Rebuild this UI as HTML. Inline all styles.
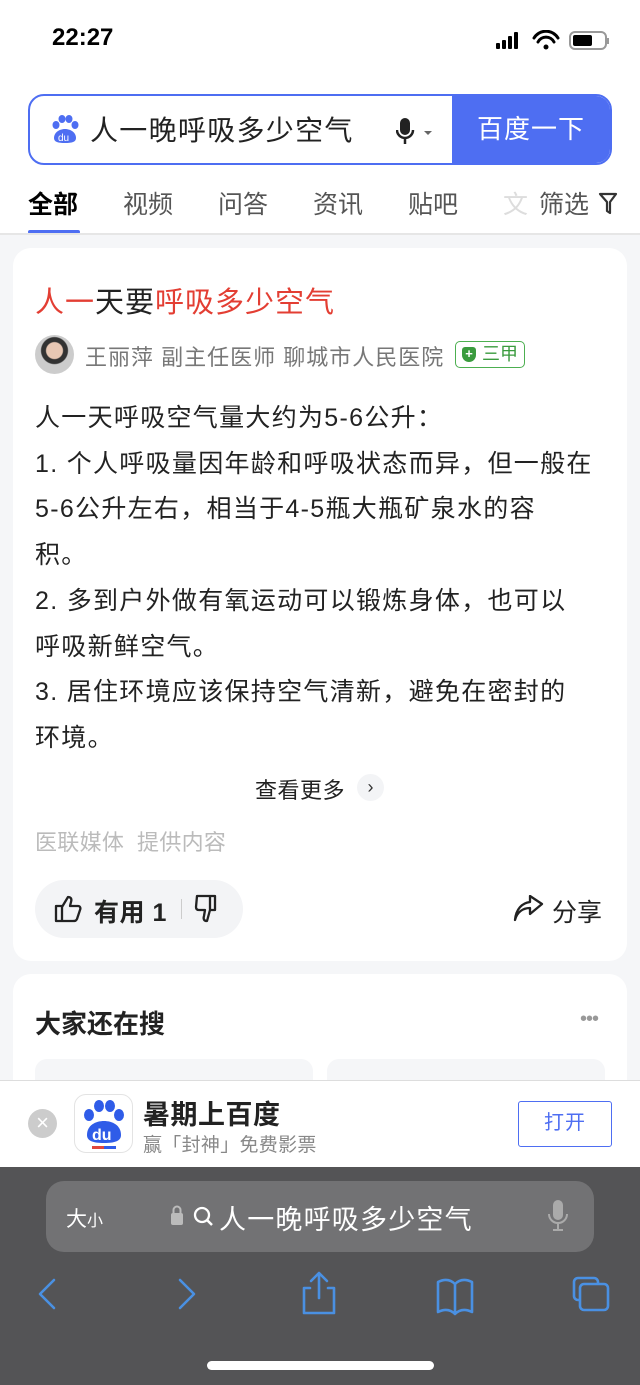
<!DOCTYPE html>
<html><head><meta charset="utf-8"><style>
*{margin:0;padding:0;box-sizing:border-box}
body{width:640px;height:1385px;overflow:hidden;background:#f5f6f8;font-family:"Liberation Sans","Noto Sans CJK SC",sans-serif;position:relative}
.abs{position:absolute;white-space:nowrap}
</style></head><body>
<div class="abs" style="left:0;top:0;width:640px;height:234px;background:#fff"></div>
<div class="abs" style="left:52px;top:24px;font-size:24px;font-weight:bold;color:#000">22:27</div>
<svg class="abs" style="left:494px;top:30px" width="120" height="22">
<rect x="2" y="13" width="4" height="6" rx="1" fill="#000"/><rect x="8" y="10" width="4" height="9" rx="1" fill="#000"/><rect x="14" y="6" width="4" height="13" rx="1" fill="#000"/><rect x="20" y="2" width="4" height="17" rx="1" fill="#000"/>
<path d="M40 8a14 14 0 0 1 24 0M44 12a9 9 0 0 1 16 0" stroke="#000" stroke-width="3" fill="none" stroke-linecap="round"/><circle cx="52" cy="17" r="2.5" fill="#000"/>
<rect x="76" y="2" width="36" height="17" rx="5" stroke="#999" stroke-width="2" fill="none"/><rect x="79" y="5" width="19" height="11" rx="2" fill="#000"/><rect x="113" y="8" width="2" height="6" fill="#999"/>
</svg>
<div class="abs" style="left:28px;top:94px;width:584px;height:71px;border:2px solid #4e6ef2;border-radius:16px;overflow:hidden;background:#fff">
<div class="abs" style="right:0;top:0;width:158px;height:71px;background:#4e6ef2;color:#fff;font-size:26px;letter-spacing:1px;line-height:67px;text-align:center">百度一下</div>
<svg class="abs" style="left:20px;top:18px" width="30" height="32"><g fill="#4e6ef2"><ellipse cx="6" cy="11" rx="3.5" ry="4"/><ellipse cx="12" cy="5" rx="3.5" ry="4"/><ellipse cx="19" cy="5" rx="3.5" ry="4"/><ellipse cx="25" cy="11" rx="3.5" ry="4"/><path d="M4 24c0-6 6-9 11-9s11 3 11 9c0 4-4 5-11 5s-11-1-11-5z"/></g><text x="8" y="27" font-size="10" fill="#fff" font-family="Liberation Sans">du</text></svg>
<div class="abs" style="left:60px;top:13px;font-size:28px;letter-spacing:1.3px;color:#222">人一晚呼吸多少空气</div>
<svg class="abs" style="left:366px;top:20px" width="44" height="32"><rect x="4" y="2" width="10" height="17" rx="5" fill="#222"/><path d="M1 14a8 8 0 0 0 16 0M9 22v6" stroke="#222" stroke-width="2.5" fill="none"/><path d="M28 15l4 4 4-4z" fill="#666"/></svg>
</div>
<div class="abs" style="top:185px;left:28px;font-size:25px;color:#000;font-weight:bold">全部</div>
<div class="abs" style="top:230px;left:28px;width:52px;height:4px;background:#4e6ef2;border-radius:2px"></div>
<div class="abs" style="top:185px;left:123px;font-size:25px;color:#555">视频</div>
<div class="abs" style="top:185px;left:218px;font-size:25px;color:#555">问答</div>
<div class="abs" style="top:185px;left:313px;font-size:25px;color:#555">资讯</div>
<div class="abs" style="top:185px;left:408px;font-size:25px;color:#555">贴吧</div>
<div class="abs" style="top:185px;left:503px;font-size:25px;color:#ddd">文</div>
<div class="abs" style="top:185px;left:530px;width:110px;height:40px;background:#fff"></div>
<div class="abs" style="top:185px;left:539px;font-size:25px;color:#555">筛选</div>
<svg class="abs" style="left:597px;top:191px" width="24" height="26"><path d="M3 3h16l-6 8v11l-3-2v-9z" stroke="#333" stroke-width="2.2" fill="none" stroke-linejoin="round"/></svg>
<div class="abs" style="top:233px;left:0;width:640px;height:2px;background:#e6e6e6"></div>

<div class="abs" style="left:13px;top:248px;width:614px;height:713px;background:#fff;border-radius:18px"></div>
<div class="abs" style="left:35px;top:279px;font-size:29px;letter-spacing:1px;color:#e33e33">人一<span style="color:#222">天要</span>呼吸多少空气</div>
<div class="abs" style="left:35px;top:335px;width:39px;height:39px;border-radius:50%;background:radial-gradient(circle at 50% 40%,#e8c8b4 0 8px,#333 9px 13px,#ccc 14px)"></div>
<div class="abs" style="left:85px;top:340px;font-size:22px;letter-spacing:1px;color:#777">王丽萍 副主任医师 聊城市人民医院</div>
<div class="abs" style="left:455px;top:341px;width:70px;height:27px;border:1.5px solid #4caf50;border-radius:5px;color:#3a9b3e;font-size:18px;line-height:24px;padding-left:26px">三甲</div>
<div class="abs" style="left:462px;top:347px;width:14px;height:15px;background:#3a9b3e;border-radius:3px 3px 7px 7px;color:#fff;font-size:13px;line-height:14px;text-align:center;font-weight:bold">+</div>
<div class="abs" style="left:35px;top:396px;font-size:25px;letter-spacing:1.3px;line-height:45.7px;color:#222">人一天呼吸空气量大约为5-6公升：<br>1. 个人呼吸量因年龄和呼吸状态而异，但一般在<br>5-6公升左右，相当于4-5瓶大瓶矿泉水的容<br>积。<br>2. 多到户外做有氧运动可以锻炼身体，也可以<br>呼吸新鲜空气。<br>3. 居住环境应该保持空气清新，避免在密封的<br>环境。</div>
<div class="abs" style="left:255px;top:773px;font-size:22px;letter-spacing:0.5px;color:#222">查看更多</div>
<div class="abs" style="left:357px;top:774px;width:27px;height:27px;border-radius:50%;background:#f3f4f6;color:#333;font-size:18px;line-height:26px;text-align:center">›</div>
<div class="abs" style="left:35px;top:825px;font-size:22px;letter-spacing:0.3px;color:#bbb">医联媒体 &nbsp;提供内容</div>
<div class="abs" style="left:35px;top:880px;width:208px;height:58px;border-radius:29px;background:#f3f4f6"></div>
<svg class="abs" style="left:54px;top:894px" width="30" height="30"><path d="M2 12h6v15H2zM8 13l6-10c3 0 4 2 3 5l-1 4h8c2 0 3 2 2 4l-3 9c-1 2-2 2-4 2H8" stroke="#222" stroke-width="2.3" fill="none" stroke-linejoin="round"/></svg>
<div class="abs" style="left:94px;top:893px;font-size:25px;letter-spacing:0.5px;color:#222;font-weight:bold">有用 1</div>
<div class="abs" style="left:181px;top:899px;width:1px;height:20px;background:#ccc"></div>
<svg class="abs" style="left:193px;top:894px" width="30" height="30"><path d="M4 2h18v14h-5l-3 11c-3 0-4-2-3-5l1-6H6c-2 0-3-1-3-3zM17 2v14" stroke="#222" stroke-width="2.3" fill="none" stroke-linejoin="round"/></svg>
<svg class="abs" style="left:513px;top:895px" width="32" height="28"><path d="M2 25c2-8 8-12 15-12v6l12-10-12-8v6C9 8 3 14 2 25z" stroke="#222" stroke-width="2.3" fill="none" stroke-linejoin="round"/></svg>
<div class="abs" style="left:552px;top:893px;font-size:25px;color:#222">分享</div>

<div class="abs" style="left:13px;top:974px;width:614px;height:200px;background:#fff;border-radius:18px"></div>
<div class="abs" style="left:35px;top:1004px;font-size:26px;color:#222;font-weight:bold">大家还在搜</div>
<div class="abs" style="left:580px;top:1008px;font-size:20px;color:#999;letter-spacing:-1px">•••</div>
<div class="abs" style="left:35px;top:1059px;width:278px;height:40px;background:#f5f6f8;border-radius:12px"></div>
<div class="abs" style="left:327px;top:1059px;width:278px;height:40px;background:#f5f6f8;border-radius:12px"></div>

<div class="abs" style="left:0;top:1080px;width:640px;height:88px;background:#fff;border-top:1px solid #ddd"></div>
<div class="abs" style="left:28px;top:1109px;width:29px;height:29px;border-radius:50%;background:#ccc;color:#fff;font-size:22px;line-height:28px;text-align:center">×</div>
<div class="abs" style="left:74px;top:1094px;width:59px;height:59px;border-radius:12px;border:1px solid #e3e3e3;background:#fff"></div>
<svg class="abs" style="left:79px;top:1097px" width="50" height="54"><g fill="#2f5ce8"><ellipse cx="10" cy="18" rx="5" ry="6"/><ellipse cx="20" cy="9" rx="5" ry="6"/><ellipse cx="31" cy="9" rx="5" ry="6"/><ellipse cx="40" cy="18" rx="5" ry="6"/><path d="M8 38c0-10 9-14 17-14s17 4 17 14c0 6-6 8-17 8S8 44 8 38z"/></g><text x="13" y="43" font-size="16" fill="#fff" font-weight="bold" font-family="Liberation Sans">du</text><rect x="13" y="49" width="12" height="3" fill="#e0463c"/><rect x="25" y="49" width="12" height="3" fill="#2f5ce8"/></svg>
<div class="abs" style="left:143px;top:1093px;font-size:27px;letter-spacing:0.5px;color:#222;font-weight:bold">暑期上百度</div>
<div class="abs" style="left:143px;top:1130px;font-size:19px;letter-spacing:0.3px;color:#888">赢「封神」免费影票</div>
<div class="abs" style="left:518px;top:1101px;width:94px;height:46px;border:1.5px solid #4e6ef2;border-radius:3px;color:#4e6ef2;font-size:20px;letter-spacing:1px;line-height:43px;text-align:center">打开</div>

<div class="abs" style="left:0;top:1167px;width:640px;height:218px;background:#545456"></div>
<div class="abs" style="left:46px;top:1181px;width:548px;height:71px;border-radius:18px;background:#727274"></div>
<div class="abs" style="left:66px;top:1203px;font-size:21px;color:#fff">大<span style="font-size:16px">小</span></div>
<svg class="abs" style="left:169px;top:1203px" width="50" height="26"><rect x="2" y="10" width="12" height="12" rx="2" fill="#bbb"/><path d="M4.5 11V7a3.5 3.5 0 0 1 7 0v4" stroke="#bbb" stroke-width="2" fill="none"/><circle cx="33" cy="12" r="7" stroke="#fff" stroke-width="2.3" fill="none"/><path d="M38 17l5 5" stroke="#fff" stroke-width="2.5"/></svg>
<div class="abs" style="left:219px;top:1198px;font-size:27px;letter-spacing:1.2px;color:#fff">人一晚呼吸多少空气</div>
<svg class="abs" style="left:546px;top:1199px" width="24" height="34"><rect x="7" y="1" width="10" height="20" rx="5" fill="#aaa"/><path d="M3 15a9 9 0 0 0 18 0M12 24v6M7 31h10" stroke="#aaa" stroke-width="2" fill="none"/></svg>
<svg class="abs" style="left:0;top:1270px" width="640" height="50" stroke="#4a90e2" stroke-width="2.6" fill="none" stroke-linecap="round" stroke-linejoin="round">
<path d="M54 10L40 24l14 14"/><path d="M180 10l14 14-14 14"/>
<path d="M310 18h-6v25h30V18h-6M319 4v24M311 11l8-8 8 8"/>
<path d="M438 12c6-3 12-3 17 2 5-5 11-5 17-2v30c-6-3-12-3-17 2-5-5-11-5-17-2zM455 14v28"/>
<rect x="574" y="8" width="24" height="22" rx="4"/><rect x="580" y="14" width="28" height="26" rx="4" fill="#545456"/>
</svg>
<div class="abs" style="left:207px;top:1361px;width:227px;height:9px;border-radius:5px;background:#fff"></div>
</body></html>
